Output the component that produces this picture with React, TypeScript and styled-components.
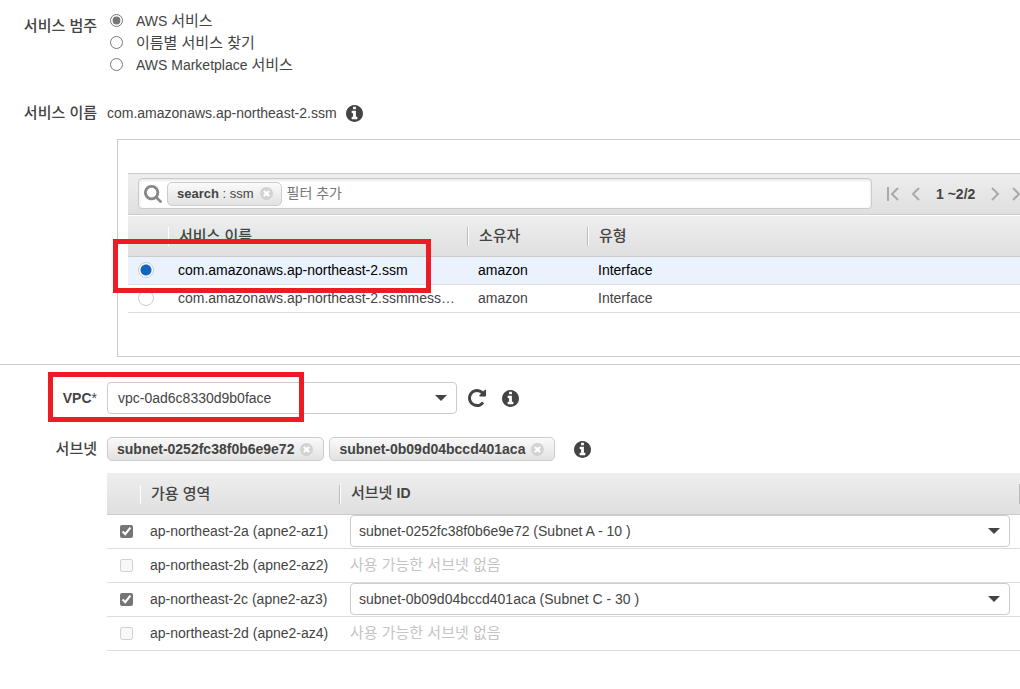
import React, { useState } from "react";
import styled, { createGlobalStyle, css } from "styled-components";

const GlobalStyle = createGlobalStyle`
  *, *::before, *::after { box-sizing: border-box; }
  body {
    margin: 0;
    background: #fff;
    color: #444;
    overflow-x: hidden;
  }
  body, input, select, button {
    font-family: "Liberation Sans", "Noto Sans CJK KR", sans-serif;
    font-size: 14px;
  }
`;

const barGradient = css`
  background: linear-gradient(#eee, #dfdfdf);
`;

const Page = styled.main`
  padding: 10px 0 38px;
  line-height: 20px;
`;

const Korean = styled.span<{ $medium?: boolean }>`
  font-size: 15px;
  font-weight: ${(p) => (p.$medium ? 500 : 400)};
`;

const FormRow = styled.div<{ $gapTop?: number }>`
  display: grid;
  grid-template-columns: 97px minmax(0, 1fr);
  column-gap: 10px;
  margin-top: ${(p) => p.$gapTop ?? 0}px;
`;

const RowLabel = styled.div<{ $height?: number }>`
  font-weight: bold;
  line-height: ${(p) => p.$height ?? 32}px;
  text-align: right;
  white-space: nowrap;
`;

const Required = styled.span`
  font-weight: normal;
`;

const Inline = styled.div<{ $gap: number }>`
  display: flex;
  align-items: center;
  gap: ${(p) => p.$gap}px;
`;

const Choice = styled.label`
  display: flex;
  align-items: center;
  gap: 13px;
  height: 22px;
  line-height: 22px;
`;

const ChoiceRadio = styled.input`
  width: 13px;
  height: 13px;
  margin: 0 0 2px 3px;
  accent-color: #767676;
`;

const IconButton = styled.button`
  display: inline-flex;
  align-items: center;
  justify-content: center;
  padding: 0;
  border: 0;
  background: none;
  color: #444;
  cursor: pointer;
`;

const Panel = styled.section`
  margin: 10px 0 0 117px;
  padding: 33px 0 43px 10px;
  border: 1px solid #ccc;
  border-right: 0;
`;

const Grid = styled.div`
  position: relative;
`;

const Highlight = styled.div<{ $top: number; $left: number; $width: number; $height: number }>`
  position: absolute;
  z-index: 2;
  top: ${(p) => p.$top}px;
  left: ${(p) => p.$left}px;
  width: ${(p) => p.$width}px;
  height: ${(p) => p.$height}px;
  border: 5px solid #ed1c24;
  pointer-events: none;
`;

const Toolbar = styled.div`
  ${barGradient}
  display: flex;
  align-items: center;
  height: 42px;
  padding: 0 0 1px 10px;
  border-top: 1px solid #ccc;
  border-bottom: 1px solid #ccc;
  overflow: hidden;
`;

const SearchBox = styled.div`
  display: flex;
  flex: 1;
  align-items: center;
  min-width: 0;
  height: 31px;
  padding-left: 5px;
  border: 1px solid #ccc;
  border-radius: 4px;
  background: #fff;
  box-shadow: inset 0 1px 3px #ddd;
  color: #888;
`;

const SearchInput = styled.input`
  flex: 1;
  min-width: 0;
  padding: 0 5px 1px;
  border: 0;
  outline: 0;
  background: none;
  &::placeholder { color: #767676; opacity: 1; }
`;

const Chip = styled.span<{ $small?: boolean }>`
  display: inline-flex;
  align-items: center;
  gap: 6px;
  height: 24px;
  margin-left: ${(p) => (p.$small ? 5 : 0)}px;
  padding: 0 ${(p) => (p.$small ? 8 : 10)}px 0 9px;
  border: 1px solid #ccc;
  border-radius: 5px;
  background: linear-gradient(#fafafa, #e2e2e2);
  color: #444;
  font-size: ${(p) => (p.$small ? 13 : 14)}px;
  font-weight: ${(p) => (p.$small ? "normal" : "bold")};
  white-space: nowrap;
`;

const ChipRemove = styled(IconButton)`
  border-radius: 50%;
  background: #fff;
  color: #d2d2d2;
`;

const Pager = styled.nav`
  display: flex;
  flex: 0 0 148px;
  align-items: center;
  min-width: 0;
  padding-left: 14px;
  white-space: nowrap;
`;

const PagerButton = styled(IconButton)`
  flex: none;
  width: 13px;
  margin-right: 10px;
`;

const PagerCount = styled.strong`
  flex: none;
  margin: 0 14px 0 4px;
`;

const Table = styled.table`
  width: 100%;
  table-layout: fixed;
  border-collapse: separate;
  border-spacing: 0;
`;

const HeadCell = styled.th<{ $ruled?: boolean }>`
  ${barGradient}
  height: 42px;
  padding: 0;
  border-top: 1px solid ${(p) => (p.$ruled ? "#fff" : "#eee")};
  border-bottom: 1px solid #ccc;
  text-align: left;
`;

const HeadText = styled.div<{ $last?: boolean }>`
  padding: 0 0 2px 10px;
  border-left: 1px solid #fff;
  border-right: ${(p) => (p.$last ? "0" : "1px solid #bbb")};
  font-size: 15px;
  font-weight: 500;
  line-height: 17px;
`;

const HeadLatin = styled.span`
  font-size: 14px;
  font-weight: bold;
`;

const Row = styled.tr<{ $selected?: boolean }>`
  background: ${(p) => (p.$selected ? "#eaf2fe" : "#fff")};
  color: ${(p) => (p.$selected ? "#000" : "#444")};
`;

const Cell = styled.td<{ $height: number; $muted?: boolean }>`
  height: ${(p) => p.$height}px;
  padding: 0 10px 1px;
  border-bottom: 1px solid #ddd;
  white-space: nowrap;
  ${(p) => p.$muted && "color: #c4c4c4; font-size: 15px;"}
`;

const MarkCell = styled.td<{ $left: number }>`
  padding: 0 0 1px ${(p) => p.$left}px;
  border-bottom: 1px solid #ddd;
  line-height: 0;
`;

const RowRadio = styled.input`
  appearance: none;
  width: 16px;
  height: 16px;
  margin: 0;
  border: 1px solid #ccc;
  border-radius: 50%;
  background: #fff;
  &:checked { background: radial-gradient(circle, #16b 0 5px, #fff 6px); }
`;

const RowCheck = styled.input`
  width: 13px;
  height: 13px;
  margin: 0;
  accent-color: #767676;
`;

const Divider = styled.hr`
  margin: 7px 0 17px;
  border: 0;
  border-top: 1px solid #ccc;
`;

const SelectBox = styled.div<{ $wide?: boolean }>`
  display: grid;
  align-items: center;
  width: ${(p) => (p.$wide ? "100%" : "350px")};
  > * { grid-area: 1 / 1; }
  > svg {
    justify-self: end;
    margin-right: 10px;
    pointer-events: none;
  }
`;

const SelectField = styled.select<{ $indent: number }>`
  appearance: none;
  width: 100%;
  height: 32px;
  padding: 0 30px 0 ${(p) => p.$indent}px;
  border: 1px solid #ccc;
  border-radius: 4px;
  background: #fff;
  color: #444;
`;

const VpcRow = styled.div`
  position: relative;
`;

const SubnetTable = styled.div`
  margin: 12px 0 0 107px;
`;

const glyphs = {
  info: "M1152 1376v-160q0-14-9-23t-23-9h-96v-512q0-14-9-23t-23-9h-320q-14 0-23 9t-9 23v160q0 14 9 23t23 9h96v320h-96q-14 0-23 9t-9 23v160q0 14 9 23t23 9h448q14 0 23-9t9-23zm-128-896v-160q0-14-9-23t-23-9h-192q-14 0-23 9t-9 23v160q0 14 9 23t23 9h192q14 0 23-9t9-23zm640 416q0 209-103 385.5t-279.5 279.5-385.5 103-385.5-103-279.5-279.5-103-385.5 103-385.5 279.5-279.5 385.5-103 385.5 103 279.5 279.5 103 385.5z",
  reload:
    "M1664 256v448q0 26-19 45t-45 19h-448q-42 0-59-40-17-39 14-69l138-138q-148-137-349-137-104 0-198.5 40.5t-163.5 109.5-109.5 163.5-40.5 198.5 40.5 198.5 109.5 163.5 163.5 109.5 198.5 40.5q119 0 225-52t179-147q7-10 23-12 15 0 25 9l137 138q9 8 9.5 20.5t-7.5 22.5q-109 132-264 204.5t-327 72.5q-156 0-298-61t-245-164-164-245-61-298 61-298 164-245 245-164 298-61q147 0 284.5 55.5t244.5 156.5l130-129q29-31 70-14 39 17 39 59z",
  remove:
    "M1277 1122q0-26-19-45l-181-181 181-181q19-19 19-45 0-27-19-46l-90-90q-19-19-46-19-26 0-45 19l-181 181-181-181q-19-19-45-19-27 0-46 19l-90 90q-19 19-19 46 0 26 19 45l181 181-181 181q-19 19-19 45 0 27 19 46l90 90q19 19 46 19 26 0 45-19l181-181 181 181q19 19 45 19 27 0 46-19l90-90q19-19 19-46zm387-226q0 209-103 385.5t-279.5 279.5-385.5 103-385.5-103-279.5-279.5-103-385.5 103-385.5 279.5-279.5 385.5-103 385.5 103 279.5 279.5 103 385.5z",
  search:
    "M1216 832q0-185-131.5-316.5t-316.5-131.5-316.5 131.5-131.5 316.5 131.5 316.5 316.5 131.5 316.5-131.5 131.5-316.5zm512 832q0 52-38 90t-90 38q-54 0-90-38l-343-342q-179 124-399 124-143 0-273.5-55.5t-225-150-150-225-55.5-273.5 55.5-273.5 150-225 225-150 273.5-55.5 273.5 55.5 225 150 150 225 55.5 273.5q0 220-124 399l343 343q37 37 37 90z",
};

function Glyph({ name, size }: { name: keyof typeof glyphs; size: number }) {
  const box = name === "search" ? "64 128 1664 1664" : "128 128 1536 1536";
  return (
    <svg width={size} height={size} viewBox={box} fill="currentColor" aria-hidden="true">
      <path d={glyphs[name]} />
    </svg>
  );
}

function Info() {
  return (
    <IconButton type="button" aria-label="정보">
      <Glyph name="info" size={17} />
    </IconButton>
  );
}

function Remove() {
  return (
    <ChipRemove type="button" aria-label="제거">
      <Glyph name="remove" size={13} />
    </ChipRemove>
  );
}

function Dropdown(props: { label: string; value: string; indent: number; wide?: boolean }) {
  return (
    <SelectBox $wide={props.wide}>
      <SelectField aria-label={props.label} $indent={props.indent}>
        <option>{props.value}</option>
      </SelectField>
      <svg width="12" height="6" viewBox="0 0 12 6" aria-hidden="true">
        <path d="M0 0h12L6 6z" fill="#444" />
      </svg>
    </SelectBox>
  );
}

function Chevron({ d }: { d: string }) {
  return (
    <svg width="13" height="14" viewBox="0 0 13 14" fill="none" stroke="#aaa" strokeWidth="2" aria-hidden="true">
      <path d={d} />
    </svg>
  );
}

const categories = [
  { id: "aws", text: <>AWS <Korean>서비스</Korean></> },
  { id: "name", text: <Korean>이름별 서비스 찾기</Korean> },
  { id: "market", text: <>AWS Marketplace <Korean>서비스</Korean></> },
];

const services = ["com.amazonaws.ap-northeast-2.ssm", "com.amazonaws.ap-northeast-2.ssmmess…"];

const zones = [
  { name: "ap-northeast-2a (apne2-az1)", subnet: "subnet-0252fc38f0b6e9e72 (Subnet A - 10 )" },
  { name: "ap-northeast-2b (apne2-az2)" },
  { name: "ap-northeast-2c (apne2-az3)", subnet: "subnet-0b09d04bccd401aca (Subnet C - 30 )" },
  { name: "ap-northeast-2d (apne2-az4)" },
];

export default function App() {
  const [category, setCategory] = useState("aws");
  const [service, setService] = useState(services[0]);

  return (
    <Page lang="ko">
      <GlobalStyle />
      <FormRow>
        <RowLabel id="category-label"><Korean $medium>서비스 범주</Korean></RowLabel>
        <div role="radiogroup" aria-labelledby="category-label">
          {categories.map((c) => (
            <Choice key={c.id}>
              <ChoiceRadio
                type="radio"
                name="category"
                checked={category === c.id}
                onChange={() => setCategory(c.id)}
              />
              <span>{c.text}</span>
            </Choice>
          ))}
        </div>
      </FormRow>

      <FormRow $gapTop={21}>
        <RowLabel><Korean $medium>서비스 이름</Korean></RowLabel>
        <Inline $gap={9}>
          <span>{service}</span>
          <Info />
        </Inline>
      </FormRow>

      <Panel>
        <Grid>
          <Toolbar>
            <SearchBox>
              <Glyph name="search" size={18} />
              <Chip $small>
                <span><b>search</b> : ssm</span>
                <Remove />
              </Chip>
              <SearchInput aria-label="필터 추가" placeholder="필터 추가" />
            </SearchBox>
            <Pager aria-label="페이지">
              <PagerButton type="button" aria-label="처음">
                <Chevron d="M2 0v14M12 1L6 7l6 6" />
              </PagerButton>
              <PagerButton type="button" aria-label="이전">
                <Chevron d="M10 1L4 7l6 6" />
              </PagerButton>
              <PagerCount>1 ~2/2</PagerCount>
              <PagerButton type="button" aria-label="다음">
                <Chevron d="M3 1l6 6-6 6" />
              </PagerButton>
              <PagerButton type="button" aria-label="마지막">
                <Chevron d="M1 1l6 6-6 6M11 0v14" />
              </PagerButton>
            </Pager>
          </Toolbar>
          <Table>
            <colgroup>
              <col width="40" />
              <col width="300" />
              <col width="120" />
              <col />
            </colgroup>
            <thead>
              <tr>
                <HeadCell $ruled />
                <HeadCell $ruled><HeadText>서비스 이름</HeadText></HeadCell>
                <HeadCell $ruled><HeadText>소유자</HeadText></HeadCell>
                <HeadCell $ruled><HeadText $last>유형</HeadText></HeadCell>
              </tr>
            </thead>
            <tbody>
              {services.map((name) => (
                <Row key={name} $selected={service === name}>
                  <MarkCell $left={10}>
                    <RowRadio
                      type="radio"
                      name="service"
                      aria-label={name}
                      checked={service === name}
                      onChange={() => setService(name)}
                    />
                  </MarkCell>
                  <Cell $height={28}>{name}</Cell>
                  <Cell $height={28}>amazon</Cell>
                  <Cell $height={28}>Interface</Cell>
                </Row>
              ))}
            </tbody>
          </Table>
          <Highlight $top={66} $left={-15} $width={318} $height={54} />
        </Grid>
      </Panel>

      <Divider />

      <VpcRow>
        <FormRow>
          <RowLabel>VPC<Required>*</Required></RowLabel>
          <Inline $gap={11}>
            <Dropdown label="VPC" value="vpc-0ad6c8330d9b0face" indent={10} />
            <Inline $gap={16}>
              <IconButton type="button" aria-label="새로 고침">
                <Glyph name="reload" size={18} />
              </IconButton>
              <Info />
            </Inline>
          </Inline>
        </FormRow>
        <Highlight $top={-10} $left={48} $width={256} $height={50} />
      </VpcRow>

      <FormRow $gapTop={23}>
        <RowLabel $height={24}><Korean $medium>서브넷</Korean></RowLabel>
        <Inline $gap={19}>
          <Inline $gap={5}>
            <Chip>subnet-0252fc38f0b6e9e72<Remove /></Chip>
            <Chip>subnet-0b09d04bccd401aca<Remove /></Chip>
          </Inline>
          <Info />
        </Inline>
      </FormRow>

      <SubnetTable>
        <Table>
          <colgroup>
            <col width="33" />
            <col width="200" />
            <col />
          </colgroup>
          <thead>
            <tr>
              <HeadCell />
              <HeadCell><HeadText>가용 영역</HeadText></HeadCell>
              <HeadCell><HeadText>서브넷 <HeadLatin>ID</HeadLatin></HeadText></HeadCell>
            </tr>
          </thead>
          <tbody>
            {zones.map((z) => (
              <Row key={z.name}>
                <MarkCell $left={13}>
                  <RowCheck type="checkbox" aria-label={z.name} defaultChecked={!!z.subnet} disabled={!z.subnet} />
                </MarkCell>
                <Cell $height={34}>{z.name}</Cell>
                <Cell $height={34} $muted={!z.subnet}>
                  {z.subnet ? (
                    <Dropdown label={`${z.name} 서브넷`} value={z.subnet} indent={8} wide />
                  ) : (
                    "사용 가능한 서브넷 없음"
                  )}
                </Cell>
              </Row>
            ))}
          </tbody>
        </Table>
      </SubnetTable>
    </Page>
  );
}
